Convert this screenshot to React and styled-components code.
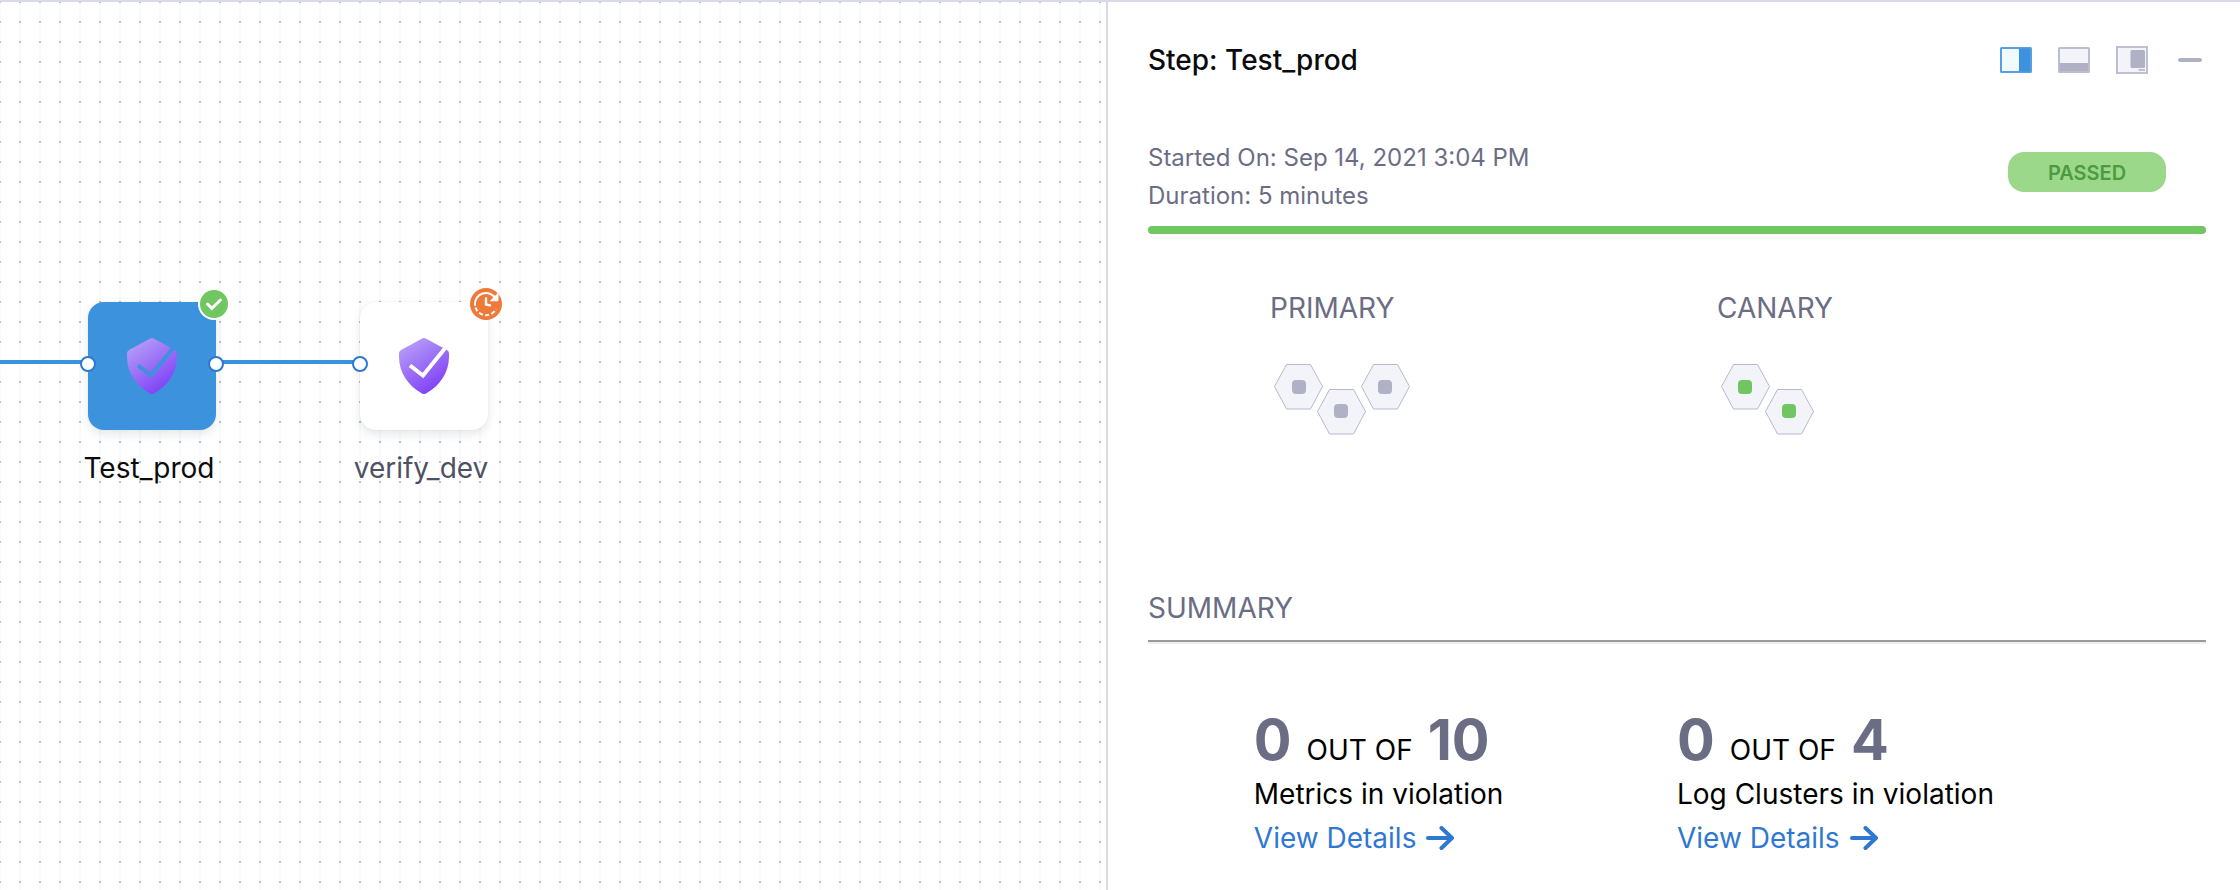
import React from "react";
import styled, { createGlobalStyle } from "styled-components";

const colors = {
  blue: "#3d92de",
  link: "#2f78d1",
  border: "#d9dae6",
  text: "#6b6d85",
  ink: "#0b0b0d",
  green: "#70c660",
  grey: "#b0b1c4",
  pale: "#f3f3fa",
};

const GlobalStyle = createGlobalStyle`
  *, *::before, *::after { box-sizing: border-box; }
  body { margin: 0; background: #fff; font-family: Inter, "Liberation Sans", sans-serif; }
  h1, h2, p { margin: 0; font-weight: 400; }
  svg { display: block; flex-shrink: 0; }
`;

const Page = styled.div`
  display: grid;
  grid-template-columns: minmax(0, 79fr) minmax(0, 81fr);
  min-height: 100vh;
  border-top: 2px solid ${colors.border};
`;

const Canvas = styled.main`
  position: relative;
  overflow: hidden;
  background-color: #f6fbff;
  background-image: linear-gradient(90deg, transparent 2px, #fff 2px),
    linear-gradient(#b7c0c7 2px, transparent 2px);
  background-size: 20px 20px;
  background-position: -1px -1px;
`;

const Wire = styled.div`
  position: absolute;
  top: 358px;
  left: ${(p) => p.$from}px;
  width: ${(p) => p.$length}px;
  height: 4px;
  background: ${colors.blue};
`;

const Node = styled.div`
  position: absolute;
  top: 300px;
  left: ${(p) => p.$x}px;
  width: 128px;
  display: flex;
  flex-direction: column;
  align-items: center;
  gap: 20px;
`;

const NodeTile = styled.button`
  position: relative;
  width: 128px;
  height: 128px;
  padding: 0;
  border: 0;
  border-radius: 16px;
  background: ${(p) => (p.$selected ? colors.blue : "#fff")};
  box-shadow: 0 4px 10px rgba(96, 97, 112, 0.16), 0 0 2px rgba(40, 41, 61, 0.06);
  display: grid;
  place-items: center;
`;

const NodeLabel = styled.span`
  font-size: 28px;
  line-height: 36px;
  white-space: nowrap;
  margin-right: 6px;
  color: ${(p) => (p.$selected ? colors.ink : "#4f5162")};
`;

const Port = styled.span`
  position: absolute;
  top: 54px;
  ${(p) => p.$side}: -8px;
  width: 16px;
  height: 16px;
  border: 2px solid ${colors.link};
  border-radius: 50%;
  background: #fff;
`;

const Badge = styled.span`
  position: absolute;
  top: -14px;
  right: -14px;
`;

const Panel = styled.aside`
  border-left: 2px solid ${colors.border};
  padding: 40px 34px 28px 40px;
  background: #fff;
`;

const PanelHeader = styled.header`
  display: flex;
  align-items: center;
  justify-content: space-between;
`;

const Title = styled.h1`
  && { font-weight: 500; }
  font-size: 28px;
  line-height: 36px;
  color: ${colors.ink};
`;

const Toolbar = styled.div`
  display: flex;
  gap: 26px;
`;

const IconButton = styled.button`
  width: 32px;
  height: 28px;
  padding: 0;
  border: 0;
  background: none;
`;

const RunInfo = styled.section`
  display: flex;
  align-items: flex-start;
  justify-content: space-between;
  margin-top: 61px;
  font-size: 24px;
  line-height: 38px;
  color: ${colors.text};
`;

const StatusPill = styled.span`
  width: 158px;
  margin: 13px 40px 0 0;
  padding-top: 2px;
  border-radius: 16px;
  background: #9bd88a;
  color: #4d9b40;
  font-size: 20px;
  font-weight: 600;
  line-height: 38px;
  text-align: center;
`;

const ProgressBar = styled.div`
  height: 8px;
  margin-top: 11px;
  border-radius: 4px;
  background: ${colors.green};
`;

const Deployments = styled.section`
  display: grid;
  grid-template-columns: 1fr 1fr;
  min-height: 300px;
  padding: 0 42px 0 122px;
  margin-top: 56px;
`;

const SectionTitle = styled.h2`
  font-size: 28px;
  line-height: 36px;
  color: ${colors.text};
`;

const Hosts = styled.div`
  padding: 38px 0 0 3px;
`;

const Divider = styled.hr`
  height: 4px;
  margin: 14px 0 0;
  border: 0;
  border-top: 2px solid #9a9a9a;
  border-bottom: 2px solid #efefef;
`;

const Stats = styled.section`
  display: grid;
  grid-template-columns: 40% 40%;
  margin-top: 64px;
  justify-content: center;
`;

const Stat = styled.div`
  font-size: 28px;
  line-height: 44px;
  color: #000;
`;

const Ratio = styled.p`
  display: flex;
  align-items: baseline;
  gap: 15px;
`;

const Figure = styled.strong`
  font-size: 56px;
  font-weight: 700;
  font-kerning: none;
  line-height: 64px;
  color: ${colors.text};
`;

const DetailsLink = styled.a`
  display: flex;
  align-items: center;
  gap: 10px;
  color: ${colors.link};
  text-decoration: none;
`;

function Shield({ id }) {
  return (
    <svg width="50" height="56" viewBox="0 0 50 56" aria-hidden="true">
      <defs>
        <linearGradient id={`${id}-fill`} x1="5" y1="4" x2="38" y2="52" gradientUnits="userSpaceOnUse">
          <stop offset="0" stopColor="#b79ff9" />
          <stop offset="1" stopColor="#7f40f5" />
        </linearGradient>
        <mask id={`${id}-cut`} maskUnits="userSpaceOnUse" x="0" y="0" width="50" height="56">
          <rect width="50" height="56" fill="#fff" />
          <path d="M11 27.5 24 37.5 47 9" fill="none" stroke="#000" strokeWidth="4" />
        </mask>
      </defs>
      <path
        d="M23.2.5Q25-.5 26.8.5L48 12Q50 13.200 50 15.500V19C50 34 41 48 27 55.400Q25 56.600 23 55.400C9 48 0 34 0 19V15.500Q0 13.200 2 12Z"
        fill={`url(#${id}-fill)`}
        mask={`url(#${id}-cut)`}
      />
    </svg>
  );
}

function SuccessIcon() {
  return (
    <svg width="32" height="32" viewBox="0 0 32 32" role="img" aria-label="Succeeded">
      <circle cx="16" cy="16" r="16" fill="#fff" />
      <circle cx="16" cy="16" r="14" fill={colors.green} />
      <path d="M9.500 16 13.800 20.300 22.500 12" fill="none" stroke="#fff" strokeWidth="3" strokeLinecap="round" />
    </svg>
  );
}

function RunningIcon() {
  return (
    <svg width="32" height="32" viewBox="0 0 32 32" role="img" aria-label="Running">
      <circle cx="16" cy="16" r="16" fill="#ee7939" />
      <g fill="none" stroke="#fff" strokeWidth="2">
        <path d="M5 17A11 11 0 0 1 25.500 10.500" strokeLinecap="round" />
        <path d="M5.600 19.500A11 11 0 0 0 26 21" strokeDasharray="4 2.400" />
        <path d="M16 10.500V16.500L20 17.400" strokeWidth="2.400" strokeLinecap="round" />
      </g>
      <path d="M28 5.500V12.800H20.500Z" fill="#fff" stroke="#fff" strokeLinejoin="round" />
    </svg>
  );
}

function LayoutIcon({ kind }) {
  if (kind === "minimize") {
    return (
      <svg width="32" height="28" viewBox="0 0 32 28" aria-hidden="true">
        <rect x="4" y="12" width="24" height="4" rx="2" fill={colors.grey} />
      </svg>
    );
  }
  if (kind === "floating") {
    return (
      <svg width="32" height="28" viewBox="0 0 32 28" aria-hidden="true">
        <rect x="1" y="1" width="30" height="26" fill={colors.pale} stroke="#bfc0d0" strokeWidth="2" />
        <rect x="14.500" y="4" width="14.500" height="18" rx="1.500" fill={colors.grey} />
        <rect x="22.500" y="23" width="6.500" height="2" fill="#bfc0d0" />
      </svg>
    );
  }
  const right = kind === "right";
  return (
    <svg width="32" height="28" viewBox="0 0 32 28" aria-hidden="true">
      <rect
        x="1" y="2" width="30" height="24" rx="0.500"
        fill={right ? "#f1faff" : colors.pale}
        stroke={right ? "#559fe2" : "#bcbdce"}
        strokeWidth="2"
      />
      {right ? (
        <path d="M19 2.500H30V25.500H19Z" fill={colors.blue} />
      ) : (
        <path d="M2 17H30V25H2Z" fill={colors.grey} />
      )}
    </svg>
  );
}

function HostCluster({ cells, color, label }) {
  return (
    <svg width="139" height="71" viewBox="0 0 139 71" role="img" aria-label={label}>
      {cells.map(([x, y, sx, sy]) => (
        <g key={x}>
          <path
            d={`M${x + 0.5} ${y + 22.5}L${x + 12.5} ${y + 0.5}H${x + 36.5}L${x + 48.5} ${y + 22.5}L${x + 36.5} ${y + 45}H${x + 12.5}Z`}
            fill={colors.pale}
            stroke="#b9b9cb"
          />
          <rect x={sx} y={sy} width="14" height="14" rx="4" fill={color} />
        </g>
      ))}
    </svg>
  );
}

function ArrowIcon() {
  return (
    <svg width="28" height="24" viewBox="0 0 28 24" aria-hidden="true">
      <path
        d="M2 12H26M15.500 2 26 12 15.500 22"
        fill="none" stroke="currentColor" strokeWidth="4" strokeLinecap="round" strokeLinejoin="round"
      />
    </svg>
  );
}

function ViolationStat({ count, total, label }) {
  return (
    <Stat>
      <Ratio>
        <Figure>{count}</Figure>
        <span>OUT OF</span>
        <Figure>{total}</Figure>
      </Ratio>
      <p>{label}</p>
      <DetailsLink href="#details">
        View Details
        <ArrowIcon />
      </DetailsLink>
    </Stat>
  );
}

export default function App() {
  return (
    <>
      <GlobalStyle />
      <Page>
        <Canvas>
          <Wire $from={0} $length={88} />
          <Wire $from={216} $length={144} />
          <Node $x={88}>
            <NodeTile type="button" $selected aria-labelledby="node-test-prod">
              <Shield id="shield-test-prod" />
              <Port $side="left" />
              <Port $side="right" />
              <Badge><SuccessIcon /></Badge>
            </NodeTile>
            <NodeLabel id="node-test-prod" $selected>Test_prod</NodeLabel>
          </Node>
          <Node $x={360}>
            <NodeTile type="button" aria-labelledby="node-verify-dev">
              <Shield id="shield-verify-dev" />
              <Port $side="left" />
              <Badge><RunningIcon /></Badge>
            </NodeTile>
            <NodeLabel id="node-verify-dev">verify_dev</NodeLabel>
          </Node>
        </Canvas>
        <Panel>
          <PanelHeader>
            <Title>Step: Test_prod</Title>
            <Toolbar>
              <IconButton type="button" aria-label="Dock right"><LayoutIcon kind="right" /></IconButton>
              <IconButton type="button" aria-label="Dock bottom"><LayoutIcon kind="bottom" /></IconButton>
              <IconButton type="button" aria-label="Float"><LayoutIcon kind="floating" /></IconButton>
              <IconButton type="button" aria-label="Minimize"><LayoutIcon kind="minimize" /></IconButton>
            </Toolbar>
          </PanelHeader>
          <RunInfo>
            <div>
              <p>Started On: Sep 14, 2021 3:04 PM</p>
              <p>Duration: 5 minutes</p>
            </div>
            <StatusPill>PASSED</StatusPill>
          </RunInfo>
          <ProgressBar />
          <Deployments>
            <div>
              <SectionTitle>PRIMARY</SectionTitle>
              <Hosts>
                <HostCluster
                  label="3 primary hosts"
                  color={colors.grey}
                  cells={[[1, 0, 19, 16], [44, 25, 61, 40], [88, 0, 105, 16]]}
                />
              </Hosts>
            </div>
            <div>
              <SectionTitle>CANARY</SectionTitle>
              <Hosts>
                <HostCluster
                  label="2 canary hosts"
                  color={colors.green}
                  cells={[[1, 0, 18, 16], [45, 25, 62, 40]]}
                />
              </Hosts>
            </div>
          </Deployments>
          <SectionTitle>SUMMARY</SectionTitle>
          <Divider />
          <Stats>
            <ViolationStat count={0} total={10} label="Metrics in violation" />
            <ViolationStat count={0} total={4} label="Log Clusters in violation" />
          </Stats>
        </Panel>
      </Page>
    </>
  );
}
